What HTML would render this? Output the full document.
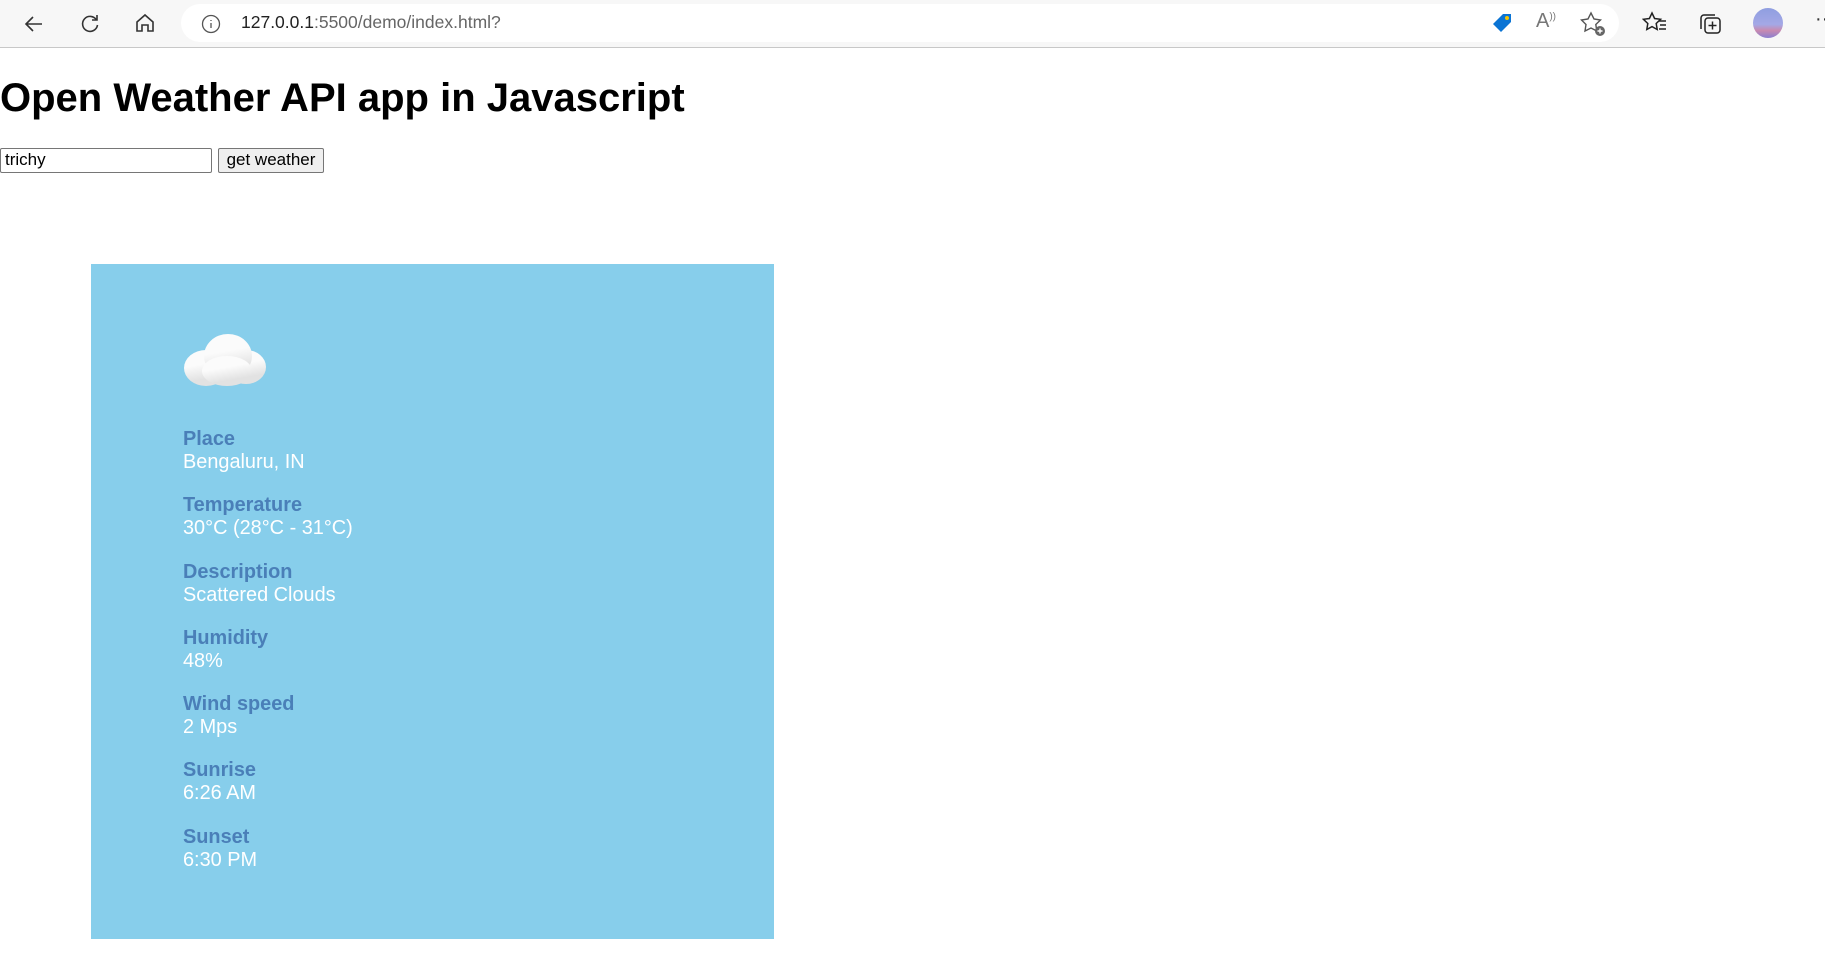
<!DOCTYPE html>
<html><head><meta charset="utf-8"><style>
*{margin:0;padding:0;box-sizing:border-box}
body{width:1825px;height:968px;background:#fff;font-family:"Liberation Sans",Arial,sans-serif;position:relative;overflow:hidden}
.bar{position:absolute;left:0;top:0;width:1825px;height:48px;background:#f7f7f7;border-bottom:1px solid #c8c8c8}
.url{position:absolute;left:181px;top:4px;width:1438px;height:38px;background:#fff;border-radius:19px}
.urltxt{position:absolute;left:241px;top:12px;font-size:17.5px;color:#666}
.urltxt b{font-weight:normal;color:#222}
h1{position:absolute;left:0;top:75.5px;font-size:40px;font-weight:bold;color:#000}
.inp{position:absolute;left:0;top:148px;width:212px;height:25px;border:1px solid #767676;border-radius:2px;font-size:17px;padding:0 4px;line-height:21px}
.btn{position:absolute;left:218px;top:148px;width:106px;height:25px;border:1px solid #767676;background:#efefef;border-radius:2px;font-size:17px;text-align:center;line-height:22px}
.card{position:absolute;left:91px;top:264px;width:683px;height:675px;background:#87ceeb}
.items{position:absolute;left:183px;top:428px;font-size:19.9px;line-height:23px}
.g{height:66.3px}
.l{font-weight:bold;color:#4a7fb8}
.v{color:#fff}
.cloud{position:absolute;left:184px;top:332px;width:86px;height:56px}
.cloud div{position:absolute;border-radius:50%;background:linear-gradient(170deg,#fbfbfb 40%,#e2e2e2 75%)}
</style></head><body>
<div class="bar">
<svg style="position:absolute;left:22px;top:12px" width="24" height="24" viewBox="0 0 24 24" fill="none" stroke="#333" stroke-width="1.6"><path d="M20 12H4M11 5l-7 7 7 7"/></svg>
<svg style="position:absolute;left:78px;top:12px" width="24" height="24" viewBox="0 0 24 24" fill="none" stroke="#333" stroke-width="1.6"><path d="M18.5 8A7.5 7.5 0 1 0 19.5 13"/><path d="M19 3v5h-5"/></svg>
<svg style="position:absolute;left:133px;top:11px" width="24" height="24" viewBox="0 0 24 24" fill="none" stroke="#333" stroke-width="1.6"><path d="M4 11l8-7 8 7v9h-5v-6h-6v6H4z"/></svg>
<div class="url">
<svg style="position:absolute;left:20px;top:10px" width="20" height="20" viewBox="0 0 20 20" fill="none" stroke="#555" stroke-width="1.3"><circle cx="10" cy="10" r="8.5"/><path d="M10 9v5M10 6v1"/></svg>
</div>
<div class="urltxt"><b>127.0.0.1</b>:5500/demo/index.html?</div>
<svg style="position:absolute;left:1490px;top:11px" width="24" height="24" viewBox="0 0 24 24"><path d="M3 13L13 3h8v8L11 21z" fill="#0b74d4"/><circle cx="17" cy="7" r="2" fill="#f5c400"/></svg>
<div style="position:absolute;left:1536px;top:10px;font-size:20px;color:#777">A<sup style="font-size:10px">))</sup></div>
<svg style="position:absolute;left:1580px;top:11px" width="26" height="26" viewBox="0 0 26 26" fill="none" stroke="#555" stroke-width="1.4"><path d="M11 2l3 6 6.5 1-4.7 4.5 1 6.5L11 17l-6 3 1-6.5L1.5 9 8 8z"/><circle cx="20" cy="20" r="5" fill="#666" stroke="none"/><path d="M20 17.5v5M17.5 20h5" stroke="#fff"/></svg>
<svg style="position:absolute;left:1642px;top:11px" width="26" height="24" viewBox="0 0 26 24" fill="none" stroke="#222" stroke-width="1.5"><path d="M10 2l2.6 5.5 6 .8-4.4 4.2 1 6L10 15.6 4.8 18.5l1-6L1.4 8.3l6-.8z"/><path d="M17 10h7M18 14h6M17 18h7"/></svg>
<svg style="position:absolute;left:1698px;top:11px" width="26" height="26" viewBox="0 0 26 26" fill="none" stroke="#222" stroke-width="1.5"><rect x="7" y="7" width="15" height="15" rx="3"/><path d="M17 4H6a3 3 0 0 0-3 3v11M14.5 10.5v8M10.5 14.5h8"/></svg>
<div style="position:absolute;left:1753px;top:8px;width:30px;height:30px;border-radius:50%;background:linear-gradient(180deg,#8f9ee0 0%,#a4a8e6 55%,#c88ab0 75%,#8b7fd0 100%)"></div>
<div style="position:absolute;left:1815px;top:8px;font-size:20px;color:#333">··</div>
</div>
<h1>Open Weather API app in Javascript</h1>
<div class="inp">trichy</div>
<div class="btn">get weather</div>
<div class="card"></div>
<div class="cloud">
<div style="left:0;top:18px;width:44px;height:36px"></div>
<div style="left:42px;top:18px;width:40px;height:34px"></div>
<div style="left:20px;top:2px;width:48px;height:44px"></div>
<div style="left:18px;top:24px;width:50px;height:30px"></div>
</div>
<div class="items">
<div class="g"><div class="l">Place</div><div class="v">Bengaluru, IN</div></div>
<div class="g"><div class="l">Temperature</div><div class="v">30°C (28°C - 31°C)</div></div>
<div class="g"><div class="l">Description</div><div class="v">Scattered Clouds</div></div>
<div class="g"><div class="l">Humidity</div><div class="v">48%</div></div>
<div class="g"><div class="l">Wind speed</div><div class="v">2 Mps</div></div>
<div class="g"><div class="l">Sunrise</div><div class="v">6:26 AM</div></div>
<div class="g"><div class="l">Sunset</div><div class="v">6:30 PM</div></div>
</div>
</body></html>
